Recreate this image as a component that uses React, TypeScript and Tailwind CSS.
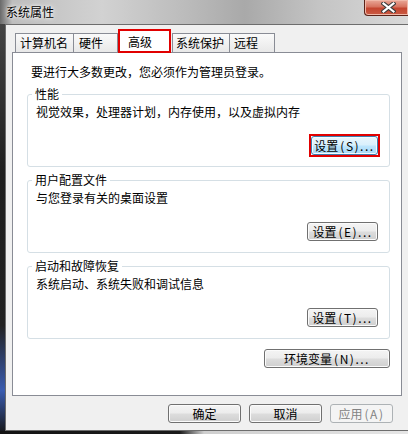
const btn =
  "h-[19px] border border-[#707070] rounded-[3px] bg-[linear-gradient(to_bottom,#f4f4f4_0%,#ececec_48%,#dddddd_52%,#cfcfcf_100%)] shadow-[inset_0_0_0_1px_#fbfbfb] text-[12px] leading-[17px] text-black flex items-center justify-center";

const btnFocus =
  "h-[19px] border border-[#3c7fb1] rounded-[3px] bg-[linear-gradient(to_bottom,#eaf6fd_0%,#d9f0fc_48%,#bee6fd_52%,#a7d9f5_100%)] shadow-[inset_0_0_0_1px_#f4fbff] text-[12px] leading-[17px] text-black flex items-center justify-center";

// "设置(S)..." -> CJK part + spaced ascii part, like the bitmap font
function Label({ text }: { text: string }) {
  const i = text.indexOf("(");
  if (i < 0) return <>{text}</>;
  return (
    <>
      {text.slice(0, i)}
      <span className="ml-[2px] tracking-[1.5px]">{text.slice(i)}</span>
    </>
  );
}

function Group({
  title,
  desc,
  label,
  focused,
  className,
}: {
  title: string;
  desc: string;
  label: string;
  focused?: boolean;
  className?: string;
}) {
  return (
    <fieldset className={"border border-[#d5dfe5] rounded-[3px] pb-[9px] " + (className ?? "")}>
      <legend className="ml-[4px] px-[3px] text-[12px] leading-[14px]">{title}</legend>
      <div className="ml-[8px] mt-[4px] text-[12px] leading-[14px]">{desc}</div>
      <div className="flex justify-end pr-[9px] mt-[15px]">
        {focused ? (
          <div className="border-2 border-[#e10000]">
            <button className={btnFocus + " w-[67px]"}>
              <Label text={label} />
            </button>
          </div>
        ) : (
          <button className={btn + " w-[71px] my-[2px] mr-[2px]"}>
            <Label text={label} />
          </button>
        )}
      </div>
    </fieldset>
  );
}

function App() {
  return (
    <div className="w-[408px] h-[434px] overflow-hidden flex flex-col bg-[linear-gradient(to_bottom,#4a4a4a_0%,#1e1e1e_40%,#222_75%,#3a5cb0_90%,#151515_100%)] font-['Noto_Sans_CJK_SC',sans-serif] text-black">
      {/* title bar */}
      <div className="h-[24px] flex justify-between bg-[linear-gradient(to_right,#6a6a6a_0%,#bdbdbd_3%,#d2d2d2_25%,#bcbcbc_45%,#a9a9a9_60%,#c4c4c4_78%,#d9d9d9_100%)]">
        <div className="pl-[6px] pt-[3px] text-[12px] leading-[17px] [text-shadow:0_0_6px_#ffffff,0_0_3px_#ffffff]">
          系统属性
        </div>
        <div className="w-[44px] h-[16px] rounded-bl-[4px] border-l border-b border-[#5a2218] bg-[linear-gradient(to_bottom,#e9a898_0%,#d7735f_45%,#c4452f_55%,#c95b44_100%)] shadow-[inset_0_0_0_1px_#f0b8a8] flex items-center justify-center pl-[4px]">
          <svg width="15" height="11" viewBox="0 0 15 11">
            <path d="M2.5 1.5 L12.5 9.5 M12.5 1.5 L2.5 9.5" stroke="#3b3b3b" strokeWidth="4.2" strokeLinecap="square" />
            <path d="M2.5 1.5 L12.5 9.5 M12.5 1.5 L2.5 9.5" stroke="#ffffff" strokeWidth="2.2" strokeLinecap="square" />
          </svg>
        </div>
      </div>

      {/* window body */}
      <div className="h-[407px] ml-[5px] border-l border-t border-b border-[#6d6d6d] bg-[#f0f0f0] pl-[6px] pt-[4px]">
        {/* tabs */}
        <div className="h-[23px] flex items-end pl-[3px] text-[12px] leading-[14px]">
          <div className="w-[59px] h-[19px] border border-b-0 border-[#898c95] bg-[linear-gradient(to_bottom,#fafafa,#e8e8e8)] pl-[4px] flex items-center">
            计算机名
          </div>
          <div className="w-[44px] h-[19px] border border-b-0 border-l-0 border-[#898c95] bg-[linear-gradient(to_bottom,#fafafa,#e8e8e8)] pl-[5px] flex items-center">
            硬件
          </div>
          <div className="relative z-10 w-[53px] h-[24px] -mb-px border-2 border-[#e10000] bg-white pl-[8px] pt-[2px] flex items-center">
            高级
          </div>
          <div className="w-[58px] h-[19px] ml-px border border-b-0 border-[#898c95] bg-[linear-gradient(to_bottom,#fafafa,#e8e8e8)] pl-[3px] flex items-center">
            系统保护
          </div>
          <div className="w-[45px] h-[19px] border border-b-0 border-l-0 border-[#898c95] bg-[linear-gradient(to_bottom,#fafafa,#e8e8e8)] pl-[4px] flex items-center">
            远程
          </div>
        </div>

        {/* tab panel */}
        <div className="w-[390px] h-[344px] border border-[#898c95] bg-white pl-[14px] pr-[11px] pt-[12px]">
          <p className="ml-[4px] text-[12px] leading-[14px]">要进行大多数更改，您必须作为管理员登录。</p>
          <Group className="mt-[8px]" title="性能" desc="视觉效果，处理器计划，内存使用，以及虚拟内存" label="设置(S)..." focused />
          <Group className="mt-[6px]" title="用户配置文件" desc="与您登录有关的桌面设置" label="设置(E)..." />
          <Group className="mt-[6px]" title="启动和故障恢复" desc="系统启动、系统失败和调试信息" label="设置(T)..." />
          <div className="flex justify-end mt-[10px]">
            <button className={btn + " w-[126px]"}>
              <Label text="环境变量(N)..." />
            </button>
          </div>
        </div>

        {/* dialog buttons */}
        <div className="flex justify-end gap-[8px] pr-[15px] mt-[8px]">
          <button className={btn + " w-[73px]"}>确定</button>
          <button className={btn + " w-[73px]"}>取消</button>
          <button className="w-[63px] h-[19px] border border-[#adb2b5] rounded-[3px] bg-[#f4f4f4] text-[12px] leading-[17px] text-[#838383] flex items-center justify-center">
            <Label text="应用(A)" />
          </button>
        </div>
      </div>

      <div className="flex-1 bg-[linear-gradient(to_right,#141414_0%,#1a1a1a_44%,#cfcfcf_50%,#e6e6e6_100%)]" />
    </div>
  );
}

export default App;
